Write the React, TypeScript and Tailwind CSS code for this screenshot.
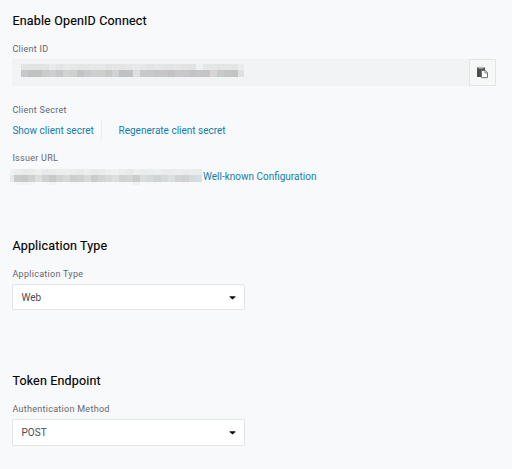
import type { ReactNode } from 'react';

const ID_TOP = ['#e2e4e3','#e1e3e3','#e1e3e3','#e2e4e4','#e8eaeb','#e4e5e6','#e7e8e9','#e6e6e7','#e3e5e6','#e5e7e7','#e5e7e8','#e6e8e8','#e3e5e5','#e6e6e7','#e4e4e5','#e6e7e8','#e8e9ea','#e6e7e8','#e4e4e5','#e6e7e8','#e3e4e4','#e3e4e5','#e4e5e5','#e3e3e4','#e1e3e3','#eff0f1','#e6e7e7','#e5e6e7','#e3e4e4','#e4e5e5','#e3e4e4','#e9ebec'];
const ID_BOTTOM = ['#c7c9c8','#bfc2c1','#bfc2c1','#c9cbca','#cdcece','#c4c8c8','#d2d2d1','#ced0d0','#c0c4c4','#c8caca','#cecece','#cdcece','#c7c7c5','#d1d2d3','#c0c2c2','#c1c3c3','#e0dfdf','#c8c9ca','#c7c8ca','#c4c5c7','#c8c7c8','#c3c1c4','#c8c8ca','#c7c7c8','#c2c3c5','#c6c4c7','#c5c4c8','#d8d4d5','#c8cac8','#c2c5c3','#c1c4c2','#dfe1e2'];
const URL_TOP = ['#ebeded','#e8eaea','#eaecec','#edefef','#e7eaea','#e9ebeb','#eceeee','#ebecec','#eaecec','#e8eaea','#eceded','#e8eaea','#e9eaea','#edf0ef','#eef1f0','#ebedec','#e8eae9','#edefef','#e9ecec','#eaeded','#edeff0','#e8eaeb','#eaecec','#ebedee','#e8eaeb','#ebeded','#e9ebec','#eaeced'];
const URL_BOTTOM = ['#cacccc','#c7c8c8','#cfd0d0','#dcdede','#d0d2d2','#c5cac9','#d1d3d3','#d7d9d8','#cccece','#cfd1d1','#d8dada','#c9cccb','#d2d4d4','#d8dad9','#dddfde','#d1d3d2','#d4d5d5','#cacbca','#dadddd','#d6d9d9','#cfd3d3','#d7dadb','#dce0e0','#cfd4d4','#cdd2d2','#d7dadc','#d9dddf','#dee2e4'];
const URL_FADE = ['#f3f5f6','#f0f2f3','#f4f6f7','#f7f9fb','#f5f7f8','#f2f4f5','#f6f8f9','#f7f9fb','#f5f7f8','#f5f7f8','#f7f9fb','#f5f7f8','#f7f9fb','#f7f9fb','#f7f9fb','#f6f8f9','#f6f8f9','#f0f2f2','#f7f9fb','#f6f8f9','#f5f7f8','#f7f9fb','#f7f9fb','#f6f8f9','#f5f7f8','#f7f9fb','#f7f9fb','#f7f9fb'];

function Strip({ colors, className }: { colors: string[]; className: string }) {
  return (
    <div className={`flex ${className}`}>
      {colors.map((c, i) => (
        <span key={i} className="h-full w-[7px] shrink-0" style={{ backgroundColor: c }} />
      ))}
    </div>
  );
}

function Heading({ children }: { children: ReactNode }) {
  return <h2 className="h-[18px] pl-[0.4px] text-[12.5px] leading-[18px] font-normal tracking-[0.17px] whitespace-nowrap text-black [-webkit-text-stroke:0.15px_black]">{children}</h2>;
}

function Label({ children }: { children: ReactNode }) {
  return <div className="h-3 pl-[0.4px] text-[9px] leading-3 tracking-[0.28px] whitespace-nowrap text-[#66666c]">{children}</div>;
}

function Select({ value, className }: { value: string; className: string }) {
  return (
    <button className={`flex w-[233px] items-center justify-between rounded-[2px] border border-[#e3e5e5] bg-white pr-2 pl-[8.5px] text-[10px] text-[#4b4b54] ${className}`}>
      <span>{value}</span>
      <svg className="mt-px" width="7" height="4" viewBox="0 0 7 4"><path d="M.6.2h5.8v.8L3.5 3.4.6 1z" fill="#0c0c0c" /></svg>
    </button>
  );
}

export default function App() {
  return (
    <main className="h-[469px] w-[512px] overflow-hidden bg-[#f8f9fb] pt-3 pl-3 font-['Roboto',sans-serif]">
      <section className="h-[225px]">
        <Heading>Enable OpenID Connect</Heading>
        <div className="mt-[13px]"><Label>Client ID</Label></div>
        <div className="mt-1 flex h-[27px] w-[484px] rounded-[2px] bg-[#f2f3f4]">
          <div className="w-[232px] overflow-hidden pt-[5px] pl-[9px]">
            <Strip colors={ID_TOP} className="h-[6px]" />
            <Strip colors={ID_BOTTOM} className="h-[7px]" />
          </div>
          <button className="ml-auto flex w-[27px] items-center justify-center rounded-[1px] border border-[#e3e5e5] bg-[#f6f8f7]">
            <svg width="13" height="13" viewBox="0 0 13 13">
              <path d="M1 1.5h8v3H5v6.5H1z" fill="#4d4d50" />
              <path d="M2.5.8h5v1.9h-5z" fill="#b8b8b6" />
              <path d="M5.5 4.5h3.8l2.2 2.2v5h-6z" fill="#fff" stroke="#62656a" strokeWidth=".9" />
              <path d="M9 4.5V7h2.5" fill="none" stroke="#62656a" strokeWidth=".8" />
            </svg>
          </button>
        </div>
        <div className="mt-[18px]"><Label>Client Secret</Label></div>
        <div className="mt-1 flex h-5 items-center text-[10px] whitespace-nowrap text-[#137ea7]">
          <a className="w-[89px] pl-[0.4px]">Show client secret</a>
          <span className="h-5 w-px bg-[#eceef0]" />
          <a className="ml-[16.5px]">Regenerate client secret</a>
        </div>
        <div className="mt-3"><Label>Issuer URL</Label></div>
        <div className="mt-[5px] -ml-[2px] flex h-4 w-fit">
          <div className="w-1">
            <div className="h-[6px] bg-[#eff1f2]" />
            <div className="h-[7px] bg-[#e7e9ea]" />
          </div>
          <div className="w-[188px] overflow-hidden">
            <Strip colors={URL_TOP} className="h-[6px]" />
            <Strip colors={URL_BOTTOM} className="h-[7px]" />
            <Strip colors={URL_FADE} className="h-[3px]" />
          </div>
          <a className="ml-px text-[10px] leading-4 whitespace-nowrap text-[#137ea7]">Well-known Configuration</a>
        </div>
      </section>
      <section className="h-[135px]">
        <Heading>Application Type</Heading>
        <div className="mt-[13px] mb-1"><Label>Application Type</Label></div>
        <Select value="Web" className="h-[26px]" />
      </section>
      <section>
        <Heading>Token Endpoint</Heading>
        <div className="mt-[13px] mb-1"><Label>Authentication Method</Label></div>
        <Select value="POST" className="h-[27px]" />
      </section>
    </main>
  );
}
